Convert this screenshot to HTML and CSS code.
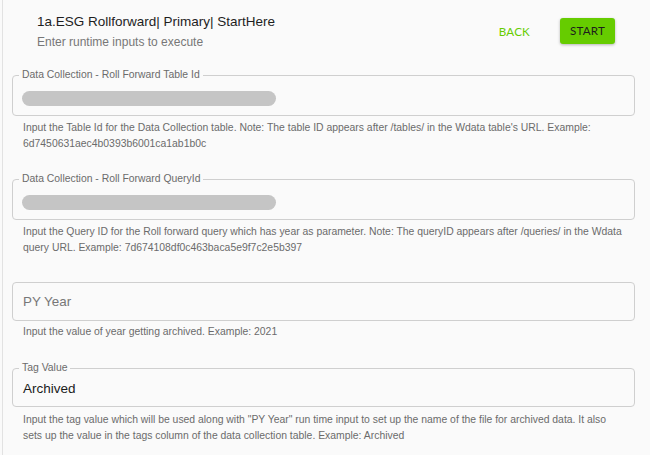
FILE: index.html
```html
<!DOCTYPE html>
<html lang="en">
<head>
<meta charset="utf-8">
<title>Runtime inputs</title>
<link rel="stylesheet" href="styles.css">
</head>
<body>
<div class="page">
  <header class="header">
    <div class="heading">
      <div class="title">1a.ESG Rollforward| Primary| StartHere</div>
      <div class="subtitle">Enter runtime inputs to execute</div>
    </div>
    <div class="actions">
      <button class="btn-back">BACK</button>
      <button class="btn-start">START</button>
    </div>
  </header>

  <div class="field field-first">
    <fieldset class="box">
      <legend class="label">Data Collection - Roll Forward Table Id</legend>
      <div class="mask"></div>
    </fieldset>
    <p class="helper">Input the Table Id for the Data Collection table. Note: The table ID appears after /tables/ in the Wdata table's URL. Example:<br>6d7450631aec4b0393b6001ca1ab1b0c</p>
  </div>

  <div class="field field-second">
    <fieldset class="box">
      <legend class="label">Data Collection - Roll Forward QueryId</legend>
      <div class="mask"></div>
    </fieldset>
    <p class="helper">Input the Query ID for the Roll forward query which has year as parameter. Note: The queryID appears after /queries/ in the Wdata<br>query URL. Example: 7d674108df0c463baca5e9f7c2e5b397</p>
  </div>

  <div class="field field-plain">
    <div class="box-plain">
      <span class="placeholder">PY Year</span>
    </div>
    <p class="helper helper-tight">Input the value of year getting archived. Example: 2021</p>
  </div>

  <div class="field">
    <fieldset class="box">
      <legend class="label">Tag Value</legend>
      <div class="value">Archived</div>
    </fieldset>
    <p class="helper helper-loose">Input the tag value which will be used along with "PY Year" run time input to set up the name of the file for archived data. It also<br>sets up the value in the tags column of the data collection table. Example: Archived</p>
  </div>
</div>
</body>
</html>
```

FILE: styles.css
```css
html, body {
  margin: 0;
  padding: 0;
  background: #fafafa;
  height: 100%;
}
body {
  font-family: "Liberation Sans", Arial, sans-serif;
  color: #222;
}
.page {
  margin-left: 2px;
  border-left: 1px solid #e2e2e2;
  padding: 0 15px 0 9px;
  min-height: 100%;
  box-sizing: border-box;
}
.header {
  display: flex;
  justify-content: space-between;
  align-items: flex-start;
  padding: 13px 20px 0 25px;
  height: 56px;
  box-sizing: border-box;
}
.title {
  font-size: 13.5px;
  line-height: 18px;
  color: #1e1e1e;
}
.subtitle {
  font-size: 12px;
  line-height: 16px;
  margin-top: 3px;
  color: #777;
}
.actions {
  display: flex;
  align-items: center;
  gap: 30px;
  margin-top: 5px;
}
.btn-back, .btn-start {
  font-family: Lato, "Liberation Sans", sans-serif;
  font-size: 11.6px;
  letter-spacing: 0.2px;
  border: none;
  cursor: pointer;
}
.btn-back {
  background: transparent;
  color: #66cc00;
  padding: 0;
}
.btn-start {
  background: #66cc00;
  color: #1d1d1d;
  height: 26px;
  width: 55px;
  border-radius: 3px;
  padding: 0 0 1px;
  box-shadow: 0 1px 3px rgba(0,0,0,0.28);
}
.field {
  margin-top: 22px;
}
.field-first {
  margin-top: 13px;
}
.field-second {
  margin-top: 21px;
}
.box {
  margin: 0;
  min-width: 0;
  border: 1px solid #cfcfcf;
  border-radius: 4px;
  padding: 0 9px 8px;
}
.label {
  font-size: 10.4px;
  line-height: 12px;
  color: #6b6b6b;
  padding: 0 3px;
  margin-left: -3px;
}
.mask {
  margin-top: 10px;
  margin-bottom: 1px;
  width: 254px;
  height: 15px;
  border-radius: 8px;
  background: #c5c5c5;
}
.value {
  margin-top: 6px;
  font-size: 13.5px;
  line-height: 18px;
  color: #1a1a1a;
  padding-left: 1px;
}
.helper {
  margin: 4px 0 0 11px;
  font-size: 10.4px;
  line-height: 16px;
  color: #6b6b6b;
  white-space: nowrap;
}
.field-plain {
  margin-top: 26px;
}
.box-plain {
  border: 1px solid #cfcfcf;
  border-radius: 4px;
  height: 37px;
  display: flex;
  align-items: center;
  padding-left: 10px;
}
.placeholder {
  font-size: 13.4px;
  color: #777;
}
.helper-tight {
  margin-top: 3px;
}
.helper-loose {
  margin-top: 5px;
}
```
